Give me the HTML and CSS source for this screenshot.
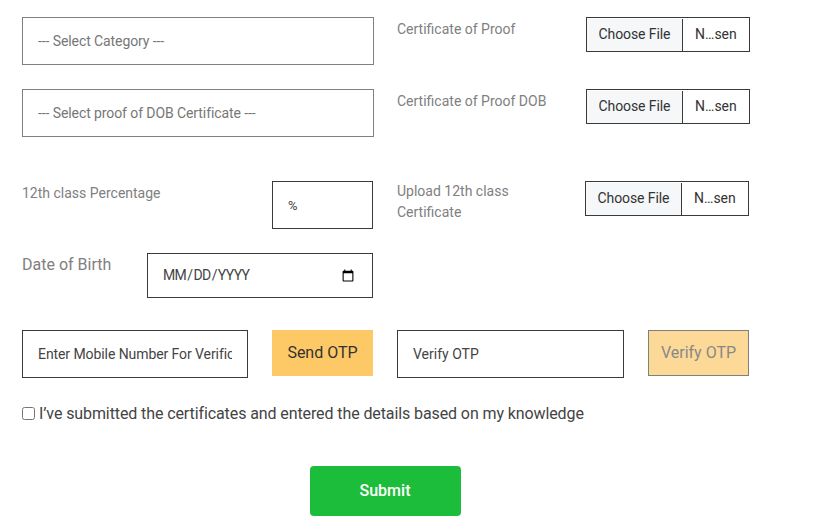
FILE: index.html
```html
<!DOCTYPE html>
<html lang="en">
<head>
    <meta charset="UTF-8">
    <meta name="viewport" content="width=device-width, initial-scale=1.0">
    <title>Certificates</title>
    <link rel="stylesheet" href="styles.css">
</head>
<body>

    <form id="details">
        <div class="row row-first">
            <select class="field field-wide">
                <option>--- Select Category ---</option>
            </select>
            <label class="label label-file">Certificate of Proof</label>
            <input type="file" class="file">
        </div>

        <div class="row row-second">
            <select class="field field-wide">
                <option>--- Select proof of DOB Certificate ---</option>
            </select>
            <label class="label label-file">Certificate of Proof DOB</label>
            <input type="file" class="file">
        </div>

        <div class="row row-third">
            <label class="label label-percent">12th class Percentage</label>
            <input type="text" class="field field-dark field-percent" placeholder="%">
            <label class="label label-upload">Upload 12th class Certificate</label>
            <input type="file" class="file">
        </div>

        <div class="row row-fourth">
            <label class="label label-dob">Date of Birth</label>
            <input type="date" class="field field-dark field-date">
        </div>

        <div class="row row-fifth">
            <input type="text" class="field field-dark field-mobile" placeholder="Enter Mobile Number For Verification">
            <button type="button" class="button send">Send OTP</button>
            <input type="text" class="field field-dark field-otp" placeholder="Verify OTP">
            <button type="button" class="button verify" disabled>Verify OTP</button>
        </div>

        <div class="agree">
            <input type="checkbox" id="agree">
            <label for="agree">I’ve submitted the certificates and entered the details based on my knowledge</label>
        </div>

        <div class="actions">
            <button type="submit" class="submit">Submit</button>
        </div>
    </form>

</body>
</html>
```

FILE: styles.css
```css
body {
    margin: 0;
    background-color: #fff;
    font-family: Roboto, sans-serif;
    font-size: 14px;
    color: #444;
}
#details {
    padding: 17px 0 0 22px;
}
.row {
    display: flex;
    align-items: flex-start;
}
.row-first {
    margin-bottom: 24px;
}
.row-second {
    margin-bottom: 44px;
}
.row-third {
    margin-bottom: 24px;
}
.row-fourth {
    margin-bottom: 32px;
}
.field {
    box-sizing: border-box;
    height: 48px;
    padding: 0 15px;
    background-color: #fff;
    border: 1px solid #808080;
    border-radius: 0;
    font-family: Roboto, sans-serif;
    font-size: 14px;
    color: #777;
    outline: none;
}
select.field {
    appearance: none;
    letter-spacing: -0.09px;
}
.field-dark {
    border-color: #3a3a3a;
    color: #444;
}
.field::placeholder {
    color: #444;
    opacity: 1;
}
.field-wide {
    width: 352px;
}
.field-percent {
    width: 101px;
    font-size: 13px;
}
.field-date {
    width: 226px;
    height: 45px;
    padding-left: 14px;
    text-transform: uppercase;
    letter-spacing: -0.6px;
}
.field-date::-webkit-datetime-edit {
    padding-bottom: 2px;
}
.field-mobile {
    width: 226px;
    letter-spacing: -0.08px;
}
.field-otp {
    width: 227px;
    margin-left: 24px;
}
.label {
    color: #808080;
    line-height: 21px;
}
.label-file {
    width: 189px;
    margin: 2px 0 0 23px;
}
.label-percent {
    width: 250px;
    margin-top: 2px;
}
.label-upload {
    width: 130px;
    margin: 0 58px 0 24px;
}
.label-dob {
    width: 125px;
    margin-top: 1px;
    font-size: 16px;
}
.file {
    box-sizing: border-box;
    width: 164px;
    height: 35px;
    padding: 0 9px 0 0;
    background-color: #fff;
    border: 1px solid #3a3a3a;
    font-family: Roboto, sans-serif;
    font-size: 14px;
    line-height: 33px;
    color: #333;
}
.file::file-selector-button {
    width: 96px;
    height: 33px;
    margin-right: 12px;
    padding: 0 0 2px;
    background-color: #f5f7f9;
    border: none;
    border-right: 1px solid #3a3a3a;
    border-radius: 0;
    font-family: Roboto, sans-serif;
    font-size: 14px;
    letter-spacing: -0.1px;
    color: #333;
}
.button {
    box-sizing: border-box;
    width: 101px;
    height: 46px;
    margin-left: 24px;
    padding: 0 0 2px;
    border: none;
    font-family: Roboto, sans-serif;
    font-size: 16px;
}
.send {
    background-color: #fdc866;
    color: #333;
}
.verify {
    background-color: #fdd998;
    border: 1px solid #808080;
    color: #888;
}
.agree {
    display: flex;
    align-items: center;
    margin-top: 26px;
    font-size: 16px;
    line-height: 20px;
    letter-spacing: -0.1px;
}
.agree input {
    width: 13px;
    height: 13px;
    margin: 0 4px 2px 0;
}
.actions {
    width: 726px;
    margin-top: 42px;
    text-align: center;
}
.submit {
    width: 151px;
    height: 50px;
    padding: 0 0 2px;
    background-color: #1dbd3c;
    border: none;
    border-radius: 4px;
    font-family: Roboto, sans-serif;
    font-size: 16px;
    font-weight: 500;
    color: #fff;
}
```
